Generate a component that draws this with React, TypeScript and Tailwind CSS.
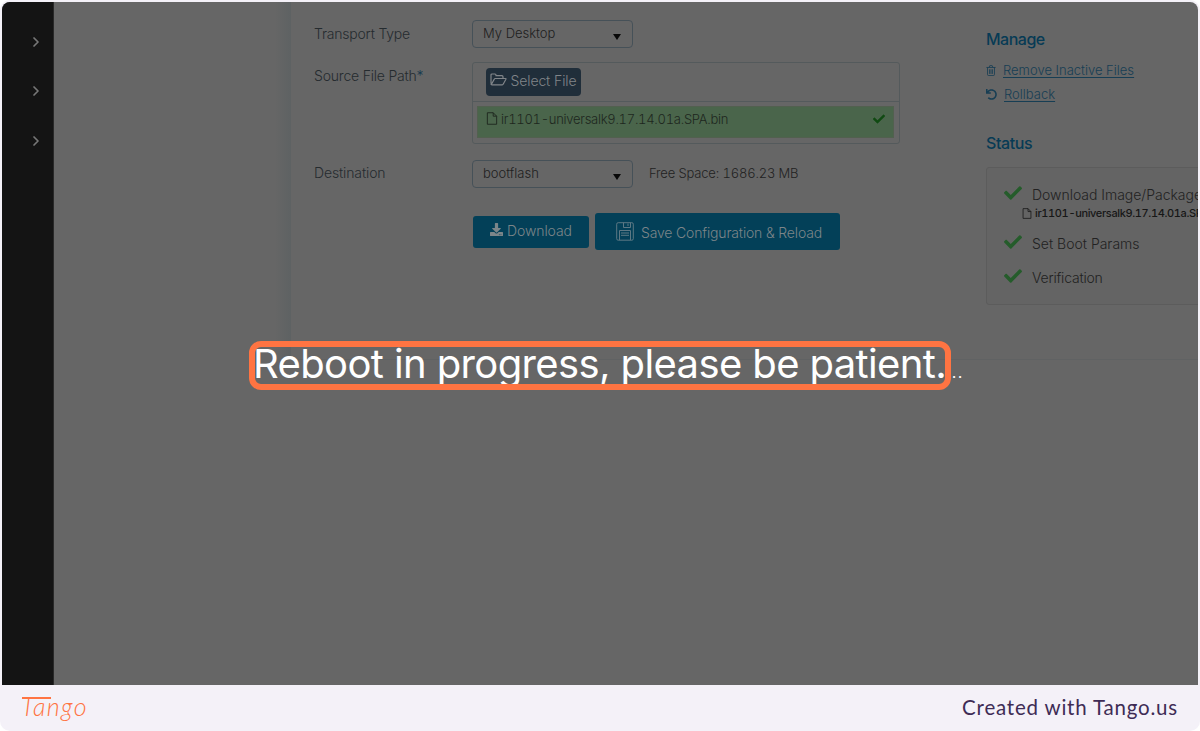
import type { ReactNode } from "react";
import { FaCheck, FaDownload, FaUndo } from "react-icons/fa";
import { FiChevronRight } from "react-icons/fi";

function FileIcon({ className }: { className: string }) {
  return (
    <svg viewBox="0 0 12 14" fill="none" stroke="currentColor" strokeWidth="1" className={className}>
      <path d="M1 .8h6.3L11 4.500v8.700H1zM7.300.8v3.700H11" />
    </svg>
  );
}

function FolderIcon() {
  return (
    <svg viewBox="0 0 17 13" fill="none" stroke="currentColor" strokeWidth="1.2" strokeLinejoin="round" className="-mt-0.5 h-[13px] w-[17px]">
      <path d="M1 10.5V2q0-1 1-1h3q1 0 1 1v.7h6q1 0 1 1v1.6M1.3 11.5l3-5.400q.3-.6 1-.6h10q1 0 .6.8l-2.600 4.700q-.4.8-1 .8H2q-1 0-1-1" />
    </svg>
  );
}

function TrashIcon() {
  return (
    <svg viewBox="0 0 10 12" fill="none" stroke="currentColor" strokeWidth="0.9" className="h-[11px] w-2.5">
      <path d="M0 2.700h10M1.200 2.700v7.600q0 1.200 1.200 1.200h5.200q1.200 0 1.200-1.200V2.700M3 2.500l.7-1.800h2.600L7 2.500M3.400 4.700v5M5 4.700v5M6.600 4.700v5" />
    </svg>
  );
}

function SaveIcon() {
  return (
    <svg viewBox="0 0 18 19" fill="none" stroke="currentColor" strokeWidth="1" className="-mt-0.5 h-[19px] w-[18px] text-[#5d7884]">
      <path d="M2.200.7h13.600q1.500 0 1.500 1.500v14.500q0 1.500-1.500 1.500H2.200Q.7 18.200.7 16.700V2.200Q.7.7 2.200.7zM7.500.7v4.800h7V.7M12 1.500v2.500M3.500 18V8.500h11V18M5 11h8M5 13.300h8" />
    </svg>
  );
}

function Select({ value }: { value: string }) {
  return (
    <div className="flex h-7 w-[161px] items-center justify-between rounded-[4px] border border-[#465158] pl-2.5 pr-[11px] text-[13px] text-[#202020]">
      <span className="-mr-px">{value}</span>
      <svg viewBox="0 0 8 6" className="mt-[5px] h-1.5 w-2 fill-[#080808]">
        <path d="M0 0h8L4 6z" />
      </svg>
    </div>
  );
}

function Label({ children }: { children: ReactNode }) {
  return <div className="w-[158px] shrink-0 text-[14px] leading-5 tracking-[-0.12px] text-[#252b2f]">{children}</div>;
}

function Status({ children, className }: { children: ReactNode; className: string }) {
  return (
    <div className={`flex items-center ${className}`}>
      <FaCheck className="-mt-1 mr-2.5 size-[18px] shrink-0 text-[#255c2b]" />
      <span>{children}</span>
    </div>
  );
}

export default function App() {
  return (
    <div className="h-[731px] w-[1200px] overflow-hidden rounded-[10px] bg-[#f4f1f8] px-0.5 pt-0.5 font-['Inter',sans-serif] font-light">
      <div className="relative flex h-[683px] overflow-hidden rounded-t-[8px] bg-[#666]">
        <nav className="flex w-[52px] shrink-0 flex-col items-end gap-[34px] border-r border-[#292929] bg-[#141414] pr-[9px] pt-8 text-[#777]">
          <FiChevronRight strokeWidth={2.6} className="size-4" />
          <FiChevronRight strokeWidth={2.6} className="-mt-px size-4" />
          <FiChevronRight strokeWidth={2.6} className="size-4" />
        </nav>
        <div className="flex h-[358px] w-[237px] shrink-0 justify-end">
          <div className="w-4 bg-linear-to-r from-[#666] to-[#5e6263]" />
        </div>
        <main className="flex h-[358px] w-[907px] shrink-0 border-b border-[#606263] pl-[23px]">
          <section className="w-[672px] shrink-0 pt-[18px]">
            <div className="flex">
              <Label><div className="mt-1 tracking-[-0.2px]">Transport Type</div></Label>
              <Select value="My Desktop" />
            </div>
            <div className="mt-3.5 flex">
              <Label><div className="mt-1 tracking-[-0.2px]">Source File Path<span className="text-[#17394d]">*</span></div></Label>
              <div className="h-[82px] w-[428px] rounded-[3px] border border-[#545a5c]">
                <div className="flex h-[39px] border-b border-[#545a5c] pl-[13px] pt-[5px]">
                  <button className="flex h-7 w-[95px] items-center justify-center gap-[3px] rounded-[4px] bg-[#202e3a] pb-[3px] text-[14px] tracking-[-0.1px] text-[#818589]">
                    <FolderIcon />
                    <span className="whitespace-nowrap">Select File</span>
                  </button>
                </div>
                <div className="pl-1 pr-[5px] pt-1">
                  <div className="flex h-8 items-center border border-[#52604f] bg-[#4a654b] pb-[5px] pl-2 pr-2 text-[13px] text-[#1e271e]">
                    <FileIcon className="-mt-0.5 h-[13px] w-3" />
                    <span className="ml-[3px] tracking-[-0.28px] tabular-nums">ir1101-universalk9.17.14.01a.SPA.bin</span>
                    <FaCheck className="-mt-0.5 ml-auto size-3 text-[#104a12]" />
                  </div>
                </div>
              </div>
            </div>
            <div className="mt-4 flex">
              <Label><div className="mt-[3px]">Destination</div></Label>
              <Select value="bootflash" />
              <span className="ml-4 mt-[3px] text-[13px] leading-5 tabular-nums tracking-[-0.16px] text-[#222]">Free Space: 1686.23 MB</span>
            </div>
            <div className="mt-[25px] flex items-center gap-1.5 pl-[159px] text-[14px] text-[#7c8589]">
              <button className="flex h-8 w-[116px] items-center justify-center gap-1 rounded-[3px] bg-[#034058] pb-0.5 tracking-[-0.1px]">
                <FaDownload className="-mt-0.5 size-[13px]" />
                <span>Download</span>
              </button>
              <button className="flex h-[37px] w-[245px] items-center gap-[7px] rounded-[3px] bg-[#034058] pl-[21px] pt-0.5 tracking-[-0.16px]">
                <SaveIcon />
                <span className="whitespace-nowrap">Save Configuration &amp; Reload</span>
              </button>
            </div>
          </section>
          <aside className="w-[212px] shrink-0 overflow-hidden pt-[27px] text-[#173e54]">
            <h2 className="text-[16px] font-medium leading-5 tracking-[-0.5px] text-[#073b55]">Manage</h2>
            <div className="mt-3 flex items-center gap-[7px] text-[13px] leading-[18px]">
              <TrashIcon />
              <a className="whitespace-nowrap underline underline-offset-2">Remove Inactive Files</a>
            </div>
            <div className="mt-1.5 flex items-center gap-[7px] text-[13px] leading-[18px]">
              <FaUndo className="size-[11px]" />
              <a className="underline underline-offset-2">Rollback</a>
            </div>
            <h2 className="mt-[30px] text-[16px] font-medium leading-5 tracking-[-0.4px] text-[#073b55]">Status</h2>
            <div className="mt-3.5 h-[138px] w-[260px] whitespace-nowrap rounded-[3px] border border-[#5c5c5c] bg-[#646464] pl-[17px] pt-[17px] text-[14px] leading-5 text-[#222]">
              <Status className="tracking-[-0.02px]">Download Image/Package</Status>
              <div className="flex items-center pl-[18px] text-[11px] font-medium leading-4 text-[#171717]">
                <FileIcon className="mr-[3px] h-[11px] w-2.5" />
                <span className="tabular-nums tracking-[-0.36px]">ir1101-universalk9.17.14.01a.SPA.bin</span>
              </div>
              <Status className="mt-[13px]">Set Boot Params</Status>
              <Status className="mt-3.5 tracking-[-0.2px]">Verification</Status>
            </div>
          </aside>
        </main>

        <div className="absolute left-[251px] top-[338px] flex items-baseline whitespace-nowrap text-white">
          <span className="text-[40px] font-normal leading-[48px] tracking-[-0.62px]">Reboot in progress, please be patient.</span>
          <span className="ml-[5px] text-[20px] tracking-[0.5px]">..</span>
        </div>
        <div className="absolute left-[247px] top-[339px] h-[49px] w-[702px] rounded-[12px] border-6 border-[#ff7442]" />
      </div>
      <footer className="flex h-[46px] items-center justify-between pl-[19px] pr-5">
        <div className="relative -mt-1 font-['Lato',sans-serif] text-[25px] font-light italic leading-8 tracking-[1.4px] text-[#ff7442]">
          Tango
          <span className="absolute left-px top-[7px] h-[1.5px] w-[29px] bg-[#ff7442]" />
        </div>
        <div className="-mt-0.5 font-['Lato',sans-serif] text-[20.5px] font-normal tracking-[0.8px] text-[#3e2c55]">Created with Tango.us</div>
      </footer>
    </div>
  );
}
